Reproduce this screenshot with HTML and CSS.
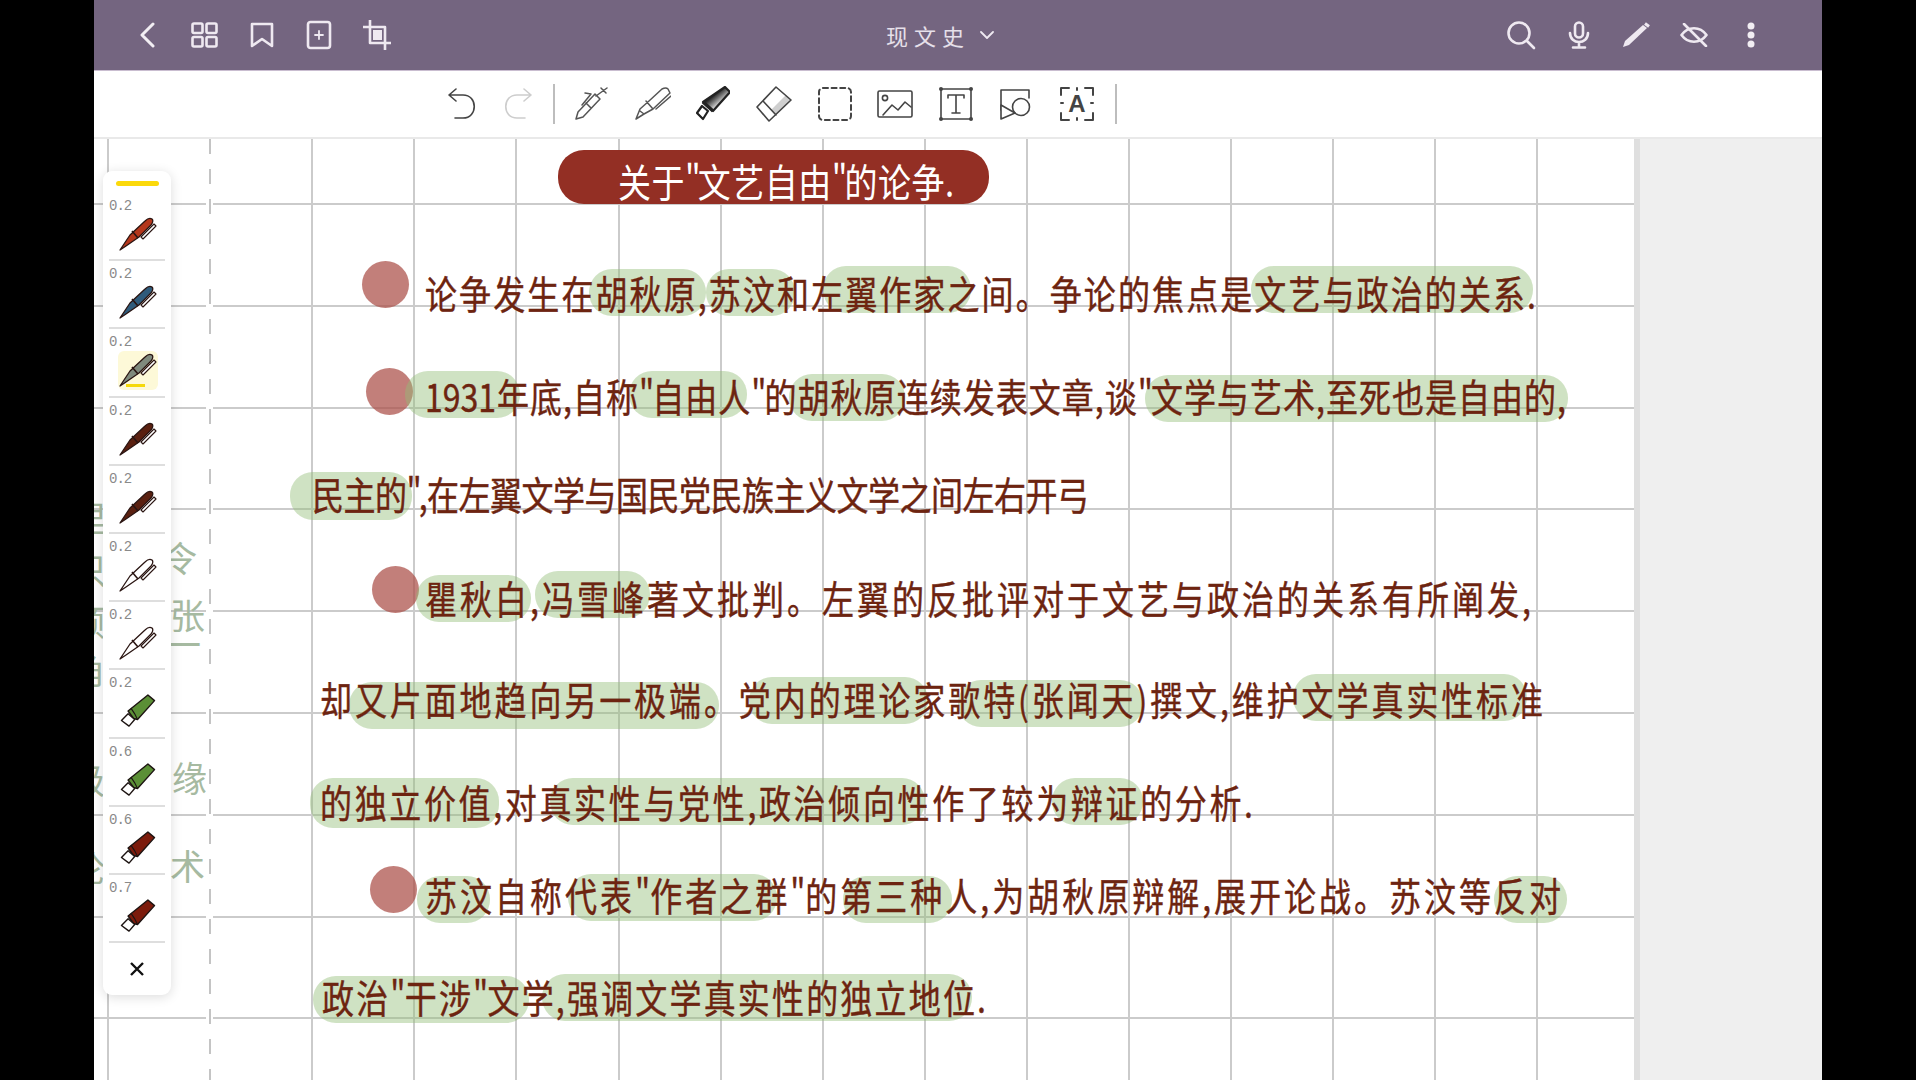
FILE: index.html
```html
<!DOCTYPE html>
<html lang="zh-CN">
<head>
<meta charset="utf-8">
<title>现文史</title>
<link rel="stylesheet" href="styles.css">
</head>
<body>
<svg class="defs" width="0" height="0" aria-hidden="true">
  <defs>
    <linearGradient id="hlfill" x1="0.2" y1="0.1" x2="0.85" y2="0.8">
      <stop offset="0.35" stop-color="#2a2a2a"/>
      <stop offset="0.85" stop-color="#fff"/>
    </linearGradient>
  </defs>
  <symbol id="pen" viewBox="0 0 38 34">
    <path d="M1 33 L11 18 L26 4 Q30 0 33 2 Q35 4 32 8 L20 20 L7 29 Z" fill="currentColor" stroke="#2a1512" stroke-width="1.3" stroke-linejoin="round"/>
    <path d="M13 14 L19 21" stroke="#2a1512" stroke-width="1.6"/>
    <path d="M24 22 L37 9 L35 7 L22 20 Z" fill="#fff" stroke="#2a1512" stroke-width="1.1" stroke-linejoin="round"/>
  </symbol>
  <symbol id="marker" viewBox="0 0 37 36">
    <path d="M8 18 L29 1 L36 7 L18 27 L14 26 Z" fill="currentColor" stroke="#1d1412" stroke-width="1.5" stroke-linejoin="round"/>
    <path d="M11 15 L15 21 L18 27" fill="none" stroke="#1d1412" stroke-width="1.2"/>
    <path d="M8 21 L1 28 L9 34 L15 27 Z" fill="#fff" stroke="#1d1412" stroke-width="1.5" stroke-linejoin="round"/>
  </symbol>
</svg>

<main class="app">
  <header class="topbar">
    <div class="icon-group">
      <span class="slot"><svg width="18" height="26" viewBox="0 0 18 26"><path class="ws" d="M15 2 L4 13 L15 24"/></svg></span>
      <span class="slot"><svg width="28" height="28" viewBox="0 0 28 28"><rect class="wt" x="2.5" y="2.5" width="10" height="9.5" rx="1.5"/><rect class="wt" x="16.5" y="2.5" width="10" height="9.5" rx="1.5"/><rect class="wt" x="2.5" y="16" width="10" height="9.5" rx="1.5"/><rect class="wt" x="16.5" y="16" width="10" height="9.5" rx="1.5"/></svg></span>
      <span class="slot"><svg width="24" height="26" viewBox="0 0 24 26"><path class="wt" d="M2 2 H22 V24 L12 17 L2 24 Z"/></svg></span>
      <span class="slot"><svg width="26" height="30" viewBox="0 0 26 30"><rect class="wt" x="2" y="2" width="22" height="26" rx="2.5"/><path class="wt thin" d="M13 11 V19 M9 15 H17"/></svg></span>
      <span class="slot"><svg width="28" height="30" viewBox="0 0 28 30"><path class="wt" d="M7 0 V23 H28 M0 7 H22 V30"/><rect x="10" y="10" width="9" height="10" fill="#efe9f1"/></svg></span>
    </div>
    <div class="doc-title"><span class="doc-name">现文史</span><svg width="14" height="9" viewBox="0 0 14 9"><path class="wt thin" d="M1 1 L7 7 L13 1"/></svg></div>
    <div class="icon-group">
      <span class="slot"><svg width="30" height="30" viewBox="0 0 30 30"><circle class="wt" cx="13" cy="13" r="10.5"/><path class="wt" d="M21 21 L28 28"/></svg></span>
      <span class="slot"><svg width="22" height="28" viewBox="0 0 22 28"><rect class="wt" x="7" y="1.5" width="8" height="15" rx="4"/><path class="wt" d="M2 12 C2 24 20 24 20 12 M11 21 V26 M5 26.5 H17"/></svg></span>
      <span class="slot"><svg width="28" height="26" viewBox="0 0 28 26"><path d="M1 25 L3 19 L21 3 L25 6 L7 23 Z" fill="#efe9f1"/><path d="M23 1.5 L27 4.5" stroke="#efe9f1" stroke-width="3"/></svg></span>
      <span class="slot"><svg width="28" height="24" viewBox="0 0 28 24"><path class="wt" d="M1.5 12 C8 3 20 3 26.5 12 C20 21 8 21 1.5 12 Z"/><path class="wt" d="M4 1 L26 23"/></svg></span>
      <span class="slot"><svg width="8" height="26" viewBox="0 0 8 26"><circle cx="4" cy="4" r="3.5" fill="#f2eef3"/><circle cx="4" cy="13" r="3.5" fill="#f2eef3"/><circle cx="4" cy="22" r="3.5" fill="#f2eef3"/></svg></span>
    </div>
  </header>

  <nav class="toolbar">
    <span class="tool tool-narrow"><svg width="30" height="32" viewBox="0 0 30 32"><path class="ds" d="M9 1 L2 7 L9 13 M2 7 H16 C31 7 31 30 16 30 H8"/></svg></span>
    <span class="tool tool-narrow"><svg width="30" height="32" viewBox="0 0 30 32"><path class="ls" d="M21 1 L28 7 L21 13 M28 7 H14 C-1 7 -1 30 14 30 H22"/></svg></span>
    <span class="tool-sep"></span>
    <span class="tool tool-first"><svg width="34" height="34" viewBox="0 0 34 34"><path class="gs" d="M1 32 L3 25 L20 7 L25 12 L8 30 Z M21 9 L32 1 M26 1 L31 6 M11 16 L16 21 M10 6 L16 7 L7 18"/></svg></span>
    <span class="tool"><svg width="36" height="34" viewBox="0 0 36 34"><path class="gs" d="M1 32 L5 22 L14 14 L27 2 Q31 0 33 2 L35 6 L18 22 L9 27 Z M11 14 L18 22 M21 22 L36 9 M5 24 L9 27"/></svg></span>
    <span class="tool"><svg width="34" height="36" viewBox="0 0 34 36"><path d="M7 16 L29 1 L34 6 L17 25 Z" fill="url(#hlfill)" stroke="#222" stroke-width="2.2" stroke-linejoin="round"/><path d="M7 16 L17 25" stroke="#222" stroke-width="3.4"/><path d="M6 20 L1 27 L7 33 L12 25 Z" fill="#fff" stroke="#222" stroke-width="2.2" stroke-linejoin="round"/></svg></span>
    <span class="tool"><svg width="36" height="36" viewBox="0 0 36 36"><path d="M20 29 L35 14 L30 9 L15 24 Z" fill="#cfcfcf"/><path class="ds" d="M1 21 L20 1 L35 14 L13 35 Z M7 15 L20 29"/></svg></span>
    <span class="tool"><svg width="36" height="36" viewBox="0 0 36 36"><rect class="ds dash" x="2" y="2" width="32" height="32" rx="4"/></svg></span>
    <span class="tool"><svg width="36" height="28" viewBox="0 0 36 28"><rect class="ds" x="1" y="1" width="34" height="26" rx="1.5"/><circle class="ds" cx="8" cy="8" r="2.6"/><path class="ds" d="M6 25 L15 15 L21 20 L28 12 L34 17"/></svg></span>
    <span class="tool"><svg width="34" height="34" viewBox="0 0 34 34"><rect class="ds" x="2" y="2" width="30" height="30"/><circle cx="2" cy="2" r="2" fill="#444"/><circle cx="32" cy="2" r="2" fill="#444"/><circle cx="2" cy="32" r="2" fill="#444"/><circle cx="32" cy="32" r="2" fill="#444"/><path class="ds" d="M9 11 V8 H25 V11 M17 8 V26 M13 26 H21"/></svg></span>
    <span class="tool"><svg width="32" height="32" viewBox="0 0 32 32"><path class="ds" d="M1 22 V2 H29 V10"/><circle cx="21" cy="19" r="8.5" fill="#fff" stroke="#444" stroke-width="1.6"/><path d="M1 17 L15 25 L1 31 Z" fill="#fff" stroke="#444" stroke-width="1.6" stroke-linejoin="round"/></svg></span>
    <span class="tool"><svg width="34" height="34" viewBox="0 0 34 34"><path class="ds mid" d="M1 8 V1 H9 M25 1 H33 V8 M1 26 V33 H9 M25 33 H33 V26 M17 1 V3 M17 31 V33 M1 16 H3 M31 16 H33"/><text class="a-mark" x="17" y="25">A</text></svg></span>
    <span class="tool-sep tool-sep-end"></span>
  </nav>

  <section class="workspace">
    <div class="page">
      <div class="ghost g-a">令</div>
      <div class="ghost g-b">张</div>
      <div class="ghost g-c">一</div>
      <div class="ghost g-d">缘</div>
      <div class="ghost g-e">术</div>
      <div class="ghost g-f">里</div>
      <div class="ghost g-g">只</div>
      <div class="ghost g-h">顾</div>
      <div class="ghost g-i">角</div>
      <div class="ghost g-j">级</div>
      <div class="ghost g-k">论</div>

      <div class="margin-line"></div>

      <div class="strokes" aria-hidden="true">
        <i class="dot d1"></i><i class="dot d2"></i><i class="dot d3"></i><i class="dot d4"></i>
        <i class="hl h1"></i><i class="hl h2"></i><i class="hl h3"></i><i class="hl h4"></i>
        <i class="hl h5"></i><i class="hl h6"></i><i class="hl h7"></i><i class="hl h8"></i>
        <i class="hl h9"></i><i class="hl h10"></i><i class="hl h11"></i>
        <i class="hl h12"></i><i class="hl h13"></i><i class="hl h14"></i><i class="hl h15"></i>
        <i class="hl h16"></i><i class="hl h17"></i><i class="hl h18"></i>
        <i class="hl h19"></i><i class="hl h20"></i><i class="hl h21"></i><i class="hl h22"></i>
        <i class="hl h23"></i><i class="hl h24"></i>
      </div>

      <div class="notes">
        <h1 class="note-title"><span class="title-ink">关于<span class="q">"</span>文艺自由<span class="q">"</span>的论争.</span></h1>
        <p class="line l1">论争发生在胡秋原,苏汶和左翼作家之间。争论的焦点是文艺与政治的关系.</p>
        <p class="line l2">1931年底,自称<span class="q">"</span>自由人<span class="q">"</span>的胡秋原连续发表文章,谈<span class="q">"</span>文学与艺术,至死也是自由的,</p>
        <p class="line l3">民主的<span class="q">"</span>,在左翼文学与国民党民族主义文学之间左右开弓</p>
        <p class="line l4">瞿秋白,冯雪峰著文批判。左翼的反批评对于文艺与政治的关系有所阐发,</p>
        <p class="line l5">却又片面地趋向另一极端。党内的理论家歌特(张闻天)撰文,维护文学真实性标准</p>
        <p class="line l6">的独立价值,对真实性与党性,政治倾向性作了较为辩证的分析.</p>
        <p class="line l7">苏汶自称代表<span class="q">"</span>作者之群<span class="q">"</span>的第三种人,为胡秋原辩解,展开论战。苏汶等反对</p>
        <p class="line l8">政治<span class="q">"</span>干涉<span class="q">"</span>文学,强调文学真实性的独立地位.</p>
      </div>

      <aside class="pen-panel">
        <div class="pen-current"></div>
        <div class="pen-row"><span class="pen-size">0.2</span><svg class="pen-icon c-red"><use href="#pen"/></svg></div>
        <div class="pen-row"><span class="pen-size">0.2</span><svg class="pen-icon c-blue"><use href="#pen"/></svg></div>
        <div class="pen-row pen-active"><span class="pen-size">0.2</span><svg class="pen-icon c-grey"><use href="#pen"/></svg></div>
        <div class="pen-row"><span class="pen-size">0.2</span><svg class="pen-icon c-brown"><use href="#pen"/></svg></div>
        <div class="pen-row"><span class="pen-size">0.2</span><svg class="pen-icon c-brown"><use href="#pen"/></svg></div>
        <div class="pen-row"><span class="pen-size">0.2</span><svg class="pen-icon c-white"><use href="#pen"/></svg></div>
        <div class="pen-row"><span class="pen-size">0.2</span><svg class="pen-icon c-white"><use href="#pen"/></svg></div>
        <div class="pen-row"><span class="pen-size">0.2</span><svg class="pen-icon c-green"><use href="#marker"/></svg></div>
        <div class="pen-row"><span class="pen-size">0.6</span><svg class="pen-icon c-green"><use href="#marker"/></svg></div>
        <div class="pen-row"><span class="pen-size">0.6</span><svg class="pen-icon c-maroon"><use href="#marker"/></svg></div>
        <div class="pen-row"><span class="pen-size">0.7</span><svg class="pen-icon c-maroon"><use href="#marker"/></svg></div>
        <div class="pen-close"><svg width="16" height="16" viewBox="0 0 16 16"><path d="M2 2 L14 14 M14 2 L2 14" stroke="#111" stroke-width="2.4"/></svg></div>
      </aside>
    </div>
    <div class="gutter"></div>
  </section>
</main>
</body>
</html>
```

FILE: styles.css
```css
* { box-sizing: border-box; }
html, body { margin: 0; height: 100%; background: #000; overflow: hidden; }
body { padding-left: 94px; font-family: "Noto Sans CJK SC", "Noto Sans", sans-serif; }
.defs { position: absolute; }

.app { width: 1728px; height: 1080px; display: flex; flex-direction: column; background: #fff; overflow: hidden; }

/* header */
.topbar { height: 71px; flex: none; display: flex; align-items: center; justify-content: space-between; padding: 0 42px 0 24px; background: #746580; border-bottom: 1px solid #c9bdd0; }
.icon-group { display: flex; }
.slot { width: 57.5px; display: flex; justify-content: center; align-items: center; }
.slot svg { display: block; }
.ws { fill: none; stroke: #f2eef3; stroke-width: 3; stroke-linecap: round; stroke-linejoin: round; }
.wt { fill: none; stroke: #efe9f1; stroke-width: 2.6; stroke-linecap: round; stroke-linejoin: round; }
.wt.thin { stroke-width: 1.8; }
.doc-title { width: 120px; margin-left: -6px; display: flex; align-items: center; gap: 10px; color: #e6e0ea; }
.doc-name { font-size: 22px; letter-spacing: 6px; line-height: 30px; white-space: nowrap; }

/* toolbar */
.toolbar { height: 68px; flex: none; display: flex; align-items: center; padding-left: 340px; background: #fff; border-bottom: 2px solid #e9e9e9; }
.tool { width: 60.6px; flex: none; display: flex; justify-content: center; align-items: center; }
.tool svg { display: block; }
.tool-narrow { width: 56px; }
.tool-first { margin-left: 7px; }
.tool-sep { width: 2px; height: 40px; margin-left: 7px; background: #bdbdbd; flex: none; }
.tool-sep-end { margin-left: 8px; }
.ds { fill: none; stroke: #444; stroke-width: 1.6; stroke-linecap: round; stroke-linejoin: round; }
.gs { fill: none; stroke: #555; stroke-width: 1.5; stroke-linecap: round; stroke-linejoin: round; }
.ds.mid { stroke-width: 2; }
.ds.dash { stroke-dasharray: 5 3.6; stroke-width: 2; }
.ls { fill: none; stroke: #cdcdcd; stroke-width: 1.6; stroke-linecap: round; stroke-linejoin: round; }
.a-mark { font-family: "Liberation Sans", sans-serif; font-weight: 700; font-size: 24px; text-anchor: middle; fill: #444; }

/* workspace */
.workspace { flex: 1; display: flex; min-height: 0; }
.page {
  position: relative; width: 1540px; flex: none; overflow: hidden; background-color: #fff;
  background-image:
    repeating-linear-gradient(to bottom, transparent 0 64px, #cbcbcb 64px 66px, transparent 66px 101.8px),
    repeating-linear-gradient(to right, transparent 0 13px, #cbcbcb 13px 15px, transparent 15px 102.1px);
}
.gutter { flex: 1; background: #efefef; border-left: 6px solid #dfdfdf; }

/* dashed margin */
.margin-line { position: absolute; left: 112px; top: 0; bottom: 0; width: 7px; background-color: #fff; background-image: repeating-linear-gradient(to bottom, #c4c4c4 0 15px, transparent 15px 30px); background-size: 2px 100%; background-position: center; background-repeat: no-repeat; }

/* strokes on the canvas */
.strokes { position: absolute; inset: 0; }
.dot { position: absolute; width: 47px; height: 47px; border-radius: 50%; background: rgba(170, 78, 70, 0.72); }
.d1 { left: 268px; top: 122px; }
.d2 { left: 272px; top: 229px; }
.d3 { left: 278px; top: 427px; }
.d4 { left: 276px; top: 727px; }

.hl { position: absolute; height: 47px; border-radius: 23px; background: rgba(146, 190, 118, 0.44); }
.h1 { left: 495px; top: 130px; width: 117px; }
.h2 { left: 612px; top: 130px; width: 89px; }
.h3 { left: 729px; top: 127px; width: 148px; }
.h4 { left: 1157px; top: 127px; width: 282px; }
.h5 { left: 311px; top: 232px; width: 115px; }
.h6 { left: 535px; top: 232px; width: 118px; }
.h7 { left: 695px; top: 235px; width: 116px; }
.h8 { left: 1051px; top: 236px; width: 423px; }
.h9 { left: 196px; top: 333px; width: 122px; height: 48px; }
.h10 { left: 322px; top: 436px; width: 115px; }
.h11 { left: 441px; top: 432px; width: 115px; }
.h12 { left: 255px; top: 543px; width: 370px; }
.h13 { left: 655px; top: 538px; width: 179px; }
.h14 { left: 864px; top: 541px; width: 185px; }
.h15 { left: 1199px; top: 535px; width: 234px; }
.h16 { left: 216px; top: 639px; width: 189px; height: 50px; }
.h17 { left: 456px; top: 639px; width: 375px; }
.h18 { left: 958px; top: 639px; width: 91px; }
.h19 { left: 323px; top: 737px; width: 73px; }
.h20 { left: 474px; top: 735px; width: 209px; }
.h21 { left: 749px; top: 737px; width: 109px; }
.h22 { left: 1400px; top: 737px; width: 73px; }
.h23 { left: 219px; top: 837px; width: 216px; }
.h24 { left: 448px; top: 835px; width: 430px; }

/* handwriting */
.notes { position: relative; color: #6d2410; }
.note-title { margin: 11px 0 0 464px; width: 431px; height: 54px; padding-left: 60px; border-radius: 26px; background: #932f24; color: #fff; font-size: 33px; font-weight: 400; line-height: 60px; white-space: nowrap; }
.title-ink { display: inline-block; transform: scaleY(1.18); letter-spacing: 0.5px; }
.q { letter-spacing: -3px; }
.line { margin: 0; height: 44px; line-height: 44px; font-size: 32px; font-weight: 400; -webkit-text-stroke: 0.35px #6d2410; white-space: nowrap; text-align: justify; text-align-last: justify; text-justify: inter-character; transform: scaleY(1.2); }
.l1 { margin: 66px 0 0 331px; width: 1111px; }
.l2 { margin: 59px 0 0 331px; width: 1141px; }
.l3 { margin: 54px 0 0 218px; width: 776px; letter-spacing: -0.5px; }
.l4 { margin: 60px 0 0 331px; width: 1106px; }
.l5 { margin: 57px 0 0 226px; width: 1223px; }
.l6 { margin: 59px 0 0 226px; width: 933px; }
.l7 { margin: 49px 0 0 331px; width: 1136px; }
.l8 { margin: 58px 0 0 228px; width: 664px; }

/* ghost page behind */
.ghost { position: absolute; font-size: 35px; line-height: 40px; color: #a6baa1; }
.g-a { left: 68px; top: 398px; }
.g-b { left: 76px; top: 455px; }
.g-c { left: 72px; top: 484px; }
.g-d { left: 78px; top: 618px; }
.g-e { left: 76px; top: 706px; }
.g-f { left: -22px; top: 358px; }
.g-g { left: -22px; top: 410px; }
.g-h { left: -24px; top: 462px; }
.g-i { left: -24px; top: 510px; }
.g-j { left: -24px; top: 620px; }
.g-k { left: -24px; top: 708px; }

/* floating pen panel */
.pen-panel { position: absolute; left: 9px; top: 32px; width: 68px; height: 824px; padding: 10px 6px 0; background: #fff; border-radius: 9px; box-shadow: 0 2px 12px rgba(0, 0, 0, 0.14); }
.pen-current { width: 43px; height: 5px; margin: 0 auto 7px; border-radius: 3px; background: #fbd90b; }
.pen-row { position: relative; height: 68.2px; border-bottom: 2px solid #dedede; }
.pen-size { display: block; height: 24px; padding-top: 4px; font-family: "Liberation Mono", monospace; font-size: 14px; line-height: 18px; letter-spacing: -1px; color: #8a8a8a; }
.pen-icon { display: block; position: relative; width: 38px; height: 34px; margin-left: 10px; }
.pen-active::before { content: ""; position: absolute; left: 9px; top: 22px; width: 40px; height: 39px; border-radius: 6px; background: #fdf9d8; }
.pen-active::after { content: ""; position: absolute; left: 17px; top: 55px; width: 19px; height: 3px; background: #f5d90a; }
.c-red { color: #b5371c; }
.c-blue { color: #2f5b7b; }
.c-grey { color: #7f8a7d; }
.c-brown { color: #5a2010; }
.c-white { color: #fff; }
.c-green { color: #5b8f36; }
.c-maroon { color: #7c1b0c; }
.pen-close { display: flex; justify-content: center; padding-top: 18px; }
```
